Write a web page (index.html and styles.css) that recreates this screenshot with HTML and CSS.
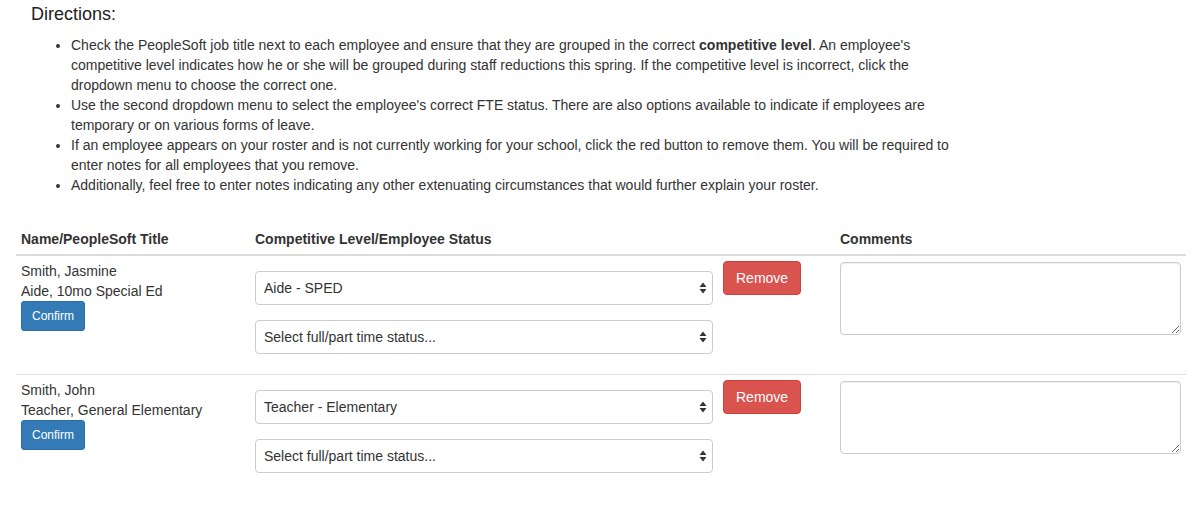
FILE: index.html
```html
<!DOCTYPE html>
<html>
<head>
<meta charset="utf-8">
<link rel="stylesheet" href="styles.css">
</head>
<body>
<div class="container">
  <div class="directions">
    <h4 class="dir-title">Directions:</h4>
    <ul class="dir-list">
      <li>Check the PeopleSoft job title next to each employee and ensure that they are grouped in the correct <b>competitive level</b>. An employee's competitive level indicates how he or she will be grouped during staff reductions this spring. If the competitive level is incorrect, click the dropdown menu to choose the correct one.</li>
      <li>Use the second dropdown menu to select the employee's correct FTE status. There are also options available to indicate if employees are temporary or on various forms of leave.</li>
      <li>If an employee appears on your roster and is not currently working for your school, click the red button to remove them. You will be required to enter notes for all employees that you remove.</li>
      <li>Additionally, feel free to enter notes indicating any other extenuating circumstances that would further explain your roster.</li>
    </ul>
  </div>

  <table class="roster">
    <thead>
      <tr>
        <th class="c-name">Name/PeopleSoft Title</th>
        <th class="c-status">Competitive Level/Employee Status</th>
        <th class="c-remove"></th>
        <th class="c-comments">Comments</th>
      </tr>
    </thead>
    <tbody>
      <tr>
        <td class="c-name">
          <div>Smith, Jasmine</div>
          <div>Aide, 10mo Special Ed</div>
          <button class="btn btn-sm btn-primary">Confirm</button>
        </td>
        <td class="c-status">
          <div class="select-wrap first">
            <select class="form-control"><option>Aide - SPED</option></select>
            <svg class="arrows" width="8" height="12" viewBox="0 0 8 12"><path d="M4 0.5 L7.5 5 H0.5 Z M4 11.5 L7.5 7 H0.5 Z" fill="#333"/></svg>
          </div>
          <div class="select-wrap">
            <select class="form-control"><option>Select full/part time status...</option></select>
            <svg class="arrows" width="8" height="12" viewBox="0 0 8 12"><path d="M4 0.5 L7.5 5 H0.5 Z M4 11.5 L7.5 7 H0.5 Z" fill="#333"/></svg>
          </div>
        </td>
        <td class="c-remove"><button class="btn btn-danger">Remove</button></td>
        <td class="c-comments"><textarea class="form-control comments"></textarea></td>
      </tr>
      <tr>
        <td class="c-name">
          <div>Smith, John</div>
          <div>Teacher, General Elementary</div>
          <button class="btn btn-sm btn-primary">Confirm</button>
        </td>
        <td class="c-status">
          <div class="select-wrap first">
            <select class="form-control"><option>Teacher - Elementary</option></select>
            <svg class="arrows" width="8" height="12" viewBox="0 0 8 12"><path d="M4 0.5 L7.5 5 H0.5 Z M4 11.5 L7.5 7 H0.5 Z" fill="#333"/></svg>
          </div>
          <div class="select-wrap">
            <select class="form-control"><option>Select full/part time status...</option></select>
            <svg class="arrows" width="8" height="12" viewBox="0 0 8 12"><path d="M4 0.5 L7.5 5 H0.5 Z M4 11.5 L7.5 7 H0.5 Z" fill="#333"/></svg>
          </div>
        </td>
        <td class="c-remove"><button class="btn btn-danger">Remove</button></td>
        <td class="c-comments"><textarea class="form-control comments"></textarea></td>
      </tr>
    </tbody>
  </table>
</div>
</body>
</html>
```

FILE: styles.css
```css
* { box-sizing: border-box; }
html, body {
  margin: 0;
  padding: 0;
  background: #fff;
}
body {
  font-family: "Liberation Sans", Arial, Helvetica, sans-serif;
  font-size: 14px;
  line-height: 20px;
  color: #333;
}
.container {
  width: 1170px;
  margin: 0 auto;
}
.directions {
  padding: 0 15px;
}
.dir-title {
  font-size: 18px;
  font-weight: normal;
  line-height: 1.1;
  margin: 5px 0 10px 0;
  color: #222;
}
.dir-list {
  margin: 0 0 29px 0;
  padding-left: 40px;
  width: 930px;
}
.roster {
  width: 1170px;
  border-collapse: collapse;
  border-spacing: 0;
}
.roster th {
  text-align: left;
  font-weight: bold;
  padding: 5px;
  vertical-align: bottom;
  border-bottom: 2px solid #ddd;
}
.roster td {
  padding: 5px;
  vertical-align: top;
  border-top: 1px solid #ddd;
}
.roster tbody tr:first-child td { border-top: 0; }
.c-name { width: 234px; }
.c-status { width: 468px; }
.c-remove { width: 117px; }
.c-comments { width: 351px; }

.btn {
  display: inline-block;
  font-family: inherit;
  font-size: 14px;
  line-height: 20px;
  padding: 6px 12px;
  border: 1px solid transparent;
  border-radius: 4px;
  color: #fff;
  cursor: pointer;
  margin: 0;
}
.btn-sm {
  font-size: 12px;
  line-height: 18px;
  padding: 5px 10px;
  border-radius: 3px;
}
.btn-primary {
  background: #337ab7;
  border-color: #2e6da4;
}
.btn-danger {
  background: #d9534f;
  border-color: #d43f3a;
}
.select-wrap {
  position: relative;
  width: 458px;
  margin-bottom: 15px;
}
.select-wrap.first { margin-top: 10px; }
.form-control {
  display: block;
  width: 100%;
  height: 34px;
  font-family: inherit;
  font-size: 14px;
  color: #555;
  background: #fff;
  border: 1px solid #ccc;
  border-radius: 4px;
  box-shadow: inset 0 1px 1px rgba(0,0,0,0.075);
}
select.form-control {
  -webkit-appearance: none;
  appearance: none;
  padding: 0 24px 0 8px;
  color: #333;
  box-shadow: none;
}
.arrows {
  position: absolute;
  right: 6px;
  top: 11px;
}
.comments {
  height: 73px;
  margin-top: 1px;
  padding: 6px 12px;
  resize: vertical;
}
```
